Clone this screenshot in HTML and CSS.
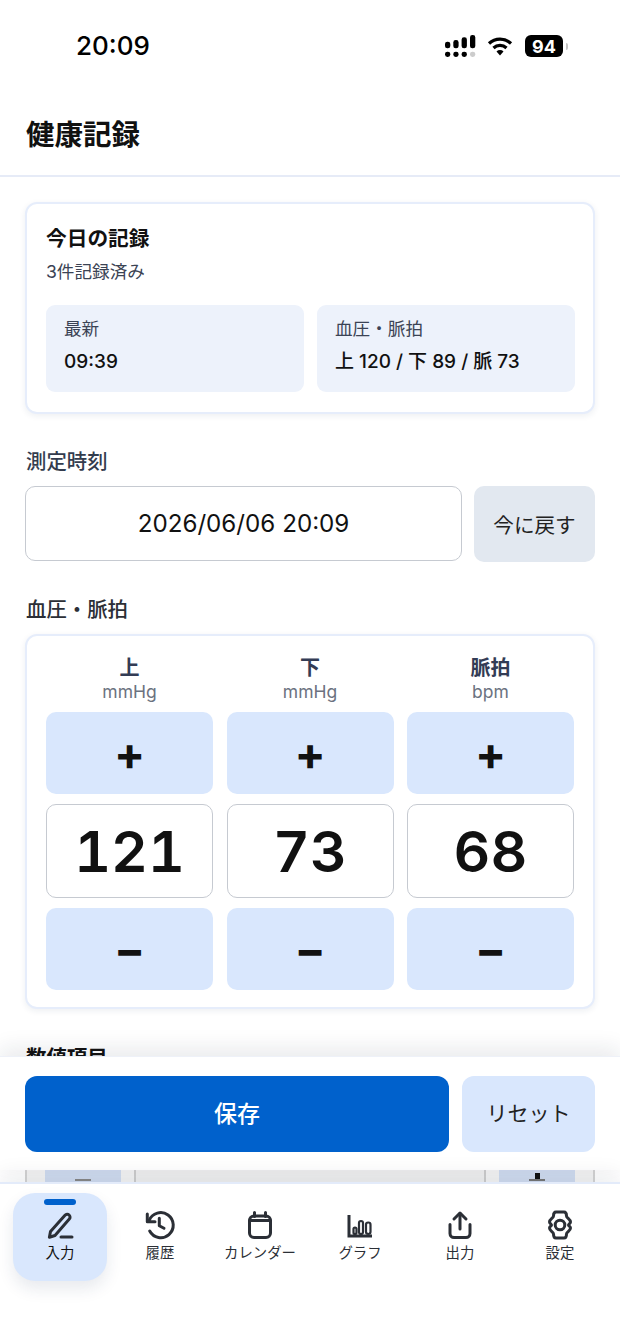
FILE: index.html
```html
<!DOCTYPE html>
<html lang="ja">
<head>
  <meta charset="UTF-8" />
  <meta name="viewport" content="width=device-width, initial-scale=1.0"/>
  <title>健康記録</title>
  <link rel="stylesheet" href="styles.css">
</head>
<body>
  <div class="phone">
    <div class="statusbar">
      <span class="clock">20:09</span>
      <div class="status-icons">
        <svg class="signal" width="32" height="22" viewBox="0 0 32 22">
          <rect x="0" y="6.7" width="5.3" height="6.6" rx="2.4" fill="#000"/>
          <rect x="8.3" y="5" width="5.3" height="8.3" rx="2.4" fill="#000"/>
          <rect x="16.6" y="2.3" width="5.3" height="11" rx="2.4" fill="#000"/>
          <rect x="25" y="0" width="5.3" height="13.3" rx="2.4" fill="#000"/>
          <rect x="0" y="16.7" width="5.3" height="5.3" rx="2.4" fill="#000"/>
          <rect x="8.3" y="16.7" width="5.3" height="5.3" rx="2.4" fill="#000"/>
          <rect x="16.6" y="16.7" width="5.3" height="5.3" rx="2.4" fill="#000"/>
          <rect x="25" y="16.7" width="5.3" height="5.3" rx="2.4" fill="#ccc"/>
        </svg>
        <svg class="wifi" width="26" height="20" viewBox="0 0 26 20">
          <path d="M2 7.5a16 16 0 0 1 22 0" fill="none" stroke="#000" stroke-width="3.2"/>
          <path d="M6.5 12a9.5 9.5 0 0 1 13 0" fill="none" stroke="#000" stroke-width="3.2"/>
          <path d="M9.5 15.5a5 5 0 0 1 7 0L13 19.5z" fill="#000"/>
        </svg>
        <div class="battery"><span>94</span></div>
        <div class="battery-cap"></div>
      </div>
    </div>

    <header class="app-header"><h1>健康記録</h1></header>

    <main class="content">
      <section class="card today">
        <h2>今日の記録</h2>
        <p class="today-count">3件記録済み</p>
        <div class="today-grid">
          <div class="today-cell">
            <div class="cell-label">最新</div>
            <div class="cell-value">09:39</div>
          </div>
          <div class="today-cell">
            <div class="cell-label">血圧・脈拍</div>
            <div class="cell-value">上 120 / 下 89 / 脈 73</div>
          </div>
        </div>
      </section>

      <div class="section-label">測定時刻</div>
      <div class="time-row">
        <div class="time-input">2026/06/06 20:09</div>
        <button class="now-btn">今に戻す</button>
      </div>

      <div class="section-label bp-label">血圧・脈拍</div>
      <section class="card bp">
        <div class="bp-col">
          <div class="bp-name">上</div>
          <div class="bp-unit">mmHg</div>
          <button class="step">+</button>
          <div class="bp-value">121</div>
          <button class="step">−</button>
        </div>
        <div class="bp-col">
          <div class="bp-name">下</div>
          <div class="bp-unit">mmHg</div>
          <button class="step">+</button>
          <div class="bp-value">73</div>
          <button class="step">−</button>
        </div>
        <div class="bp-col">
          <div class="bp-name">脈拍</div>
          <div class="bp-unit">bpm</div>
          <button class="step">+</button>
          <div class="bp-value">68</div>
          <button class="step">−</button>
        </div>
      </section>

      <div class="section-label next-label">数値項目</div>
      <div class="peek-row">
        <div class="peek-step"><span class="peek-minus"></span></div>
        <div class="peek-field"></div>
        <div class="peek-step"><span class="peek-plus"></span></div>
      </div>
    </main>

    <div class="action-bar">
      <button class="save-btn"><span>保存</span></button>
      <button class="reset-btn"><span>リセット</span></button>
    </div>

    <nav class="tabbar">
      <div class="tab active">
        <span class="tab-mark"></span>
        <svg class="tab-icon" viewBox="0 0 32 32">
          <path d="M6.5 22.5 21 6.2a2.9 2.9 0 0 1 4.3 3.9L11 26.5l-5.6 1.8z"/>
          <path d="M17 28h11"/>
        </svg>
        <span>入力</span>
      </div>
      <div class="tab">
        <svg class="tab-icon" viewBox="0 0 32 32">
          <path d="M5.2 11.3A12.5 12.5 0 1 1 5.7 22"/>
          <path d="M3.3 5v7.7H11"/>
          <path d="M15.3 9.3v7.4l4.7 2.6"/>
        </svg>
        <span>履歴</span>
      </div>
      <div class="tab">
        <svg class="tab-icon" viewBox="0 0 32 32">
          <rect x="5.5" y="7" width="21" height="21.5" rx="4.5"/>
          <path d="M5.5 11.5h21"/>
          <path d="M10.5 3.5v4M21.5 3.5v4"/>
        </svg>
        <span>カレンダー</span>
      </div>
      <div class="tab">
        <svg class="tab-icon" viewBox="0 0 32 32">
          <path class="axis" d="M5 6v21h23"/>
          <rect class="thin" x="9.5" y="18.5" width="3" height="6.5" rx="1.5"/>
          <rect class="thin" x="15" y="12" width="4" height="13" rx="2"/>
          <rect class="thin" x="22" y="13.5" width="4.5" height="11.5" rx="2.2"/>
        </svg>
        <span>グラフ</span>
      </div>
      <div class="tab">
        <svg class="tab-icon" viewBox="0 0 32 32">
          <path d="M16 20V4.5"/>
          <path d="M10 10l6-6 6 6"/>
          <path d="M6 15.5v9a4 4 0 0 0 4 4h12a4 4 0 0 0 4-4v-9"/>
        </svg>
        <span>出力</span>
      </div>
      <div class="tab">
        <svg class="tab-icon" viewBox="0 0 32 32">
          <circle cx="16" cy="16" r="4.8"/>
          <path d="M12 3H20C22 3 22.5 5.5 22.5 7C22.5 9 26.5 10 26.5 13C26.5 14.5 24.5 15 24.5 16C24.5 17 26.5 17.5 26.5 19C26.5 22 22.5 23 22.5 25C22.5 26.5 22 29 20 29H12C10 29 9.5 26.5 9.5 25C9.5 23 5.5 22 5.5 19C5.5 17.5 7.5 17 7.5 16C7.5 15 5.5 14.5 5.5 13C5.5 10 9.5 9 9.5 7C9.5 5.5 10 3 12 3Z"/>
        </svg>
        <span>設定</span>
      </div>
    </nav>
  </div>
</body>
</html>
```

FILE: styles.css
```css
* {
  box-sizing: border-box;
}
html, body {
  margin: 0;
  padding: 0;
}
body {
  background: #fff;
  font-family: Inter, "Noto Sans CJK JP", sans-serif;
  color: #111;
}
button {
  font-family: inherit;
  border: none;
  padding: 0;
}
.phone {
  width: 620px;
  height: 1344px;
  position: relative;
  overflow: hidden;
  background: #fff;
}

/* status bar */
.statusbar {
  height: 92px;
  padding: 0 52px 0 76px;
  display: flex;
  justify-content: space-between;
  align-items: center;
}
.clock {
  font-size: 26px;
  font-weight: 500;
  color: #000;
  line-height: 32px;
}
.status-icons {
  display: flex;
  align-items: center;
}
.wifi {
  margin-left: 10px;
}
.battery {
  margin-left: 12px;
  width: 38px;
  height: 22px;
  background: #000;
  border-radius: 6px;
  color: #fff;
  font-size: 18px;
  font-weight: 700;
  display: flex;
  align-items: center;
  justify-content: center;
}
.battery-cap {
  width: 2px;
  height: 7px;
  margin-left: 3px;
  background: #c4c4c4;
  border-radius: 0 2px 2px 0;
}

/* header */
.app-header {
  height: 85px;
  padding: 24px 26px 0;
  border-bottom: 2px solid #e6ebf7;
}
.app-header h1 {
  margin: 0;
  font-size: 28.5px;
  line-height: 38px;
  font-weight: 700;
  color: #111;
}

.content {
  padding: 25px 25px 0 25px;
}
.card {
  background: #fff;
  border: 2px solid #e6edfb;
  border-radius: 12px;
  box-shadow: 0 2px 6px rgba(30, 50, 90, 0.08);
}

/* today */
.today {
  height: 212px;
  padding: 20px 19px 18px;
}
.today h2 {
  margin: 0;
  font-size: 20.7px;
  line-height: 30px;
  font-weight: 700;
}
.today-count {
  margin: 7px 0 0;
  font-size: 17.6px;
  line-height: 22px;
  color: #3b4354;
}
.today-grid {
  margin-top: 22px;
  display: grid;
  grid-template-columns: 258px 258px;
  gap: 13px;
}
.today-cell {
  height: 87px;
  padding: 12px 18px;
  background: #edf2fb;
  border-radius: 9px;
}
.cell-label {
  font-size: 17.6px;
  line-height: 24px;
  color: #3b4354;
}
.cell-value {
  margin-top: 8px;
  font-size: 19px;
  line-height: 26px;
  font-weight: 500;
  color: #111;
}

.section-label {
  font-size: 20.4px;
  line-height: 28px;
  font-weight: 500;
  color: #333c4e;
  margin-top: 34px;
  padding-left: 1px;
}

/* time row */
.time-row {
  display: flex;
  gap: 12px;
  margin-top: 10px;
}
.time-input {
  flex: 1;
  height: 75px;
  background: #fff;
  border: 1.5px solid #c6cad1;
  border-radius: 10px;
  display: flex;
  align-items: center;
  justify-content: center;
  font-size: 24.2px;
  color: #111;
}
.now-btn {
  width: 121px;
  height: 76px;
  background: #e2e8f0;
  border-radius: 10px;
  font-size: 20.6px;
  color: #222;
}

/* blood pressure */
.bp-label {
  margin-top: 34px;
  color: #2c2f36;
}
.bp {
  height: 375px;
  margin-top: 10px;
  padding: 18px 19px;
  display: grid;
  grid-template-columns: repeat(3, 167px);
  gap: 13.5px;
}
.bp-col {
  display: flex;
  flex-direction: column;
  align-items: stretch;
  text-align: center;
}
.bp-name {
  font-size: 20px;
  line-height: 28px;
  font-weight: 600;
  color: #333c55;
}
.bp-unit {
  font-size: 17.5px;
  line-height: 20px;
  color: #6b7280;
  margin-bottom: 10px;
}
.step {
  height: 82px;
  background: #d9e7fd;
  border-radius: 10px;
  font-size: 46px;
  line-height: 1;
  font-weight: 700;
  color: #111;
}
.bp-value {
  height: 94px;
  margin: 10px 0;
  background: #fff;
  border: 1.5px solid #c6cad1;
  border-radius: 10px;
  display: flex;
  align-items: center;
  justify-content: center;
  font-size: 57px;
  font-weight: 600;
  font-variant-numeric: tabular-nums;
  color: #111;
}

/* the row that has scrolled behind the bars */
.next-label {
  margin-top: 35px;
  color: #111;
  font-weight: 700;
}
.peek-row {
  margin-top: 97px;
  height: 14px;
  display: flex;
  gap: 13px;
  padding: 0 18px;
  background: #f4f4f4;
  border-left: 2px solid #d4d4d4;
  border-right: 2px solid #d4d4d4;
}
.peek-step {
  position: relative;
  width: 76px;
  background: #d0dcf0;
}
.peek-field {
  flex: 1;
  background: #f0f0f0;
  border-left: 2px solid #cdcdcd;
  border-right: 2px solid #cdcdcd;
}
.peek-minus {
  position: absolute;
  left: 30px;
  top: 10px;
  width: 16px;
  height: 2px;
  background: #888;
}
.peek-plus {
  position: absolute;
  left: 30px;
  top: 10px;
  width: 16px;
  height: 2px;
  background: #777;
}
.peek-plus::before {
  content: "";
  position: absolute;
  left: 5.5px;
  top: -6px;
  width: 5px;
  height: 6px;
  background: #111;
}

/* save / reset */
.action-bar {
  position: absolute;
  left: 0;
  right: 0;
  top: 1056px;
  height: 114px;
  padding: 19px 25px 0;
  display: flex;
  gap: 13px;
  background: #fff;
  box-shadow: 0 -8px 20px rgba(20, 30, 50, 0.09);
  border-top: 1px solid #eef1f8;
}
.save-btn {
  flex: 1;
  height: 76px;
  background: #0061cc;
  color: #fff;
  border-radius: 12px;
  font-size: 23px;
  font-weight: 500;
}
.reset-btn {
  width: 133px;
  height: 76px;
  background: #d9e7fd;
  color: #222;
  border-radius: 12px;
  font-size: 21px;
}
.save-btn span, .reset-btn span {
  display: block;
  margin-top: -5px;
}

/* bottom tabs */
.tabbar {
  position: absolute;
  left: 0;
  right: 0;
  top: 1182px;
  height: 162px;
  background: #fff;
  border-top: 2px solid #e3ebfa;
  box-shadow: 0 -8px 20px rgba(20, 30, 50, 0.07);
  padding: 9px 10px 0 10px;
  display: grid;
  grid-template-columns: repeat(6, 1fr);
  align-items: start;
}
.tab {
  position: relative;
  height: 88px;
  display: flex;
  flex-direction: column;
  align-items: center;
  padding-top: 16px;
  font-size: 14.4px;
  line-height: 22px;
  color: #2b2f36;
}
.tab.active {
  width: 94px;
  margin-left: 3px;
  background: #d9e7fd;
  border-radius: 22px;
  box-shadow: 0 8px 16px rgba(30, 50, 90, 0.1);
  color: #111;
}
.tab-mark {
  position: absolute;
  top: 6px;
  left: 31px;
  width: 32px;
  height: 6px;
  border-radius: 3px;
  background: #0061cc;
}
.tab-icon {
  width: 32px;
  height: 32px;
  margin-bottom: 1px;
  fill: none;
  stroke: #2b2f36;
  stroke-width: 3;
  stroke-linecap: round;
  stroke-linejoin: round;
}
.tab-icon .axis {
  stroke-linecap: butt;
  stroke-linejoin: miter;
}
.tab-icon .thin {
  stroke-width: 2.2;
}
```
